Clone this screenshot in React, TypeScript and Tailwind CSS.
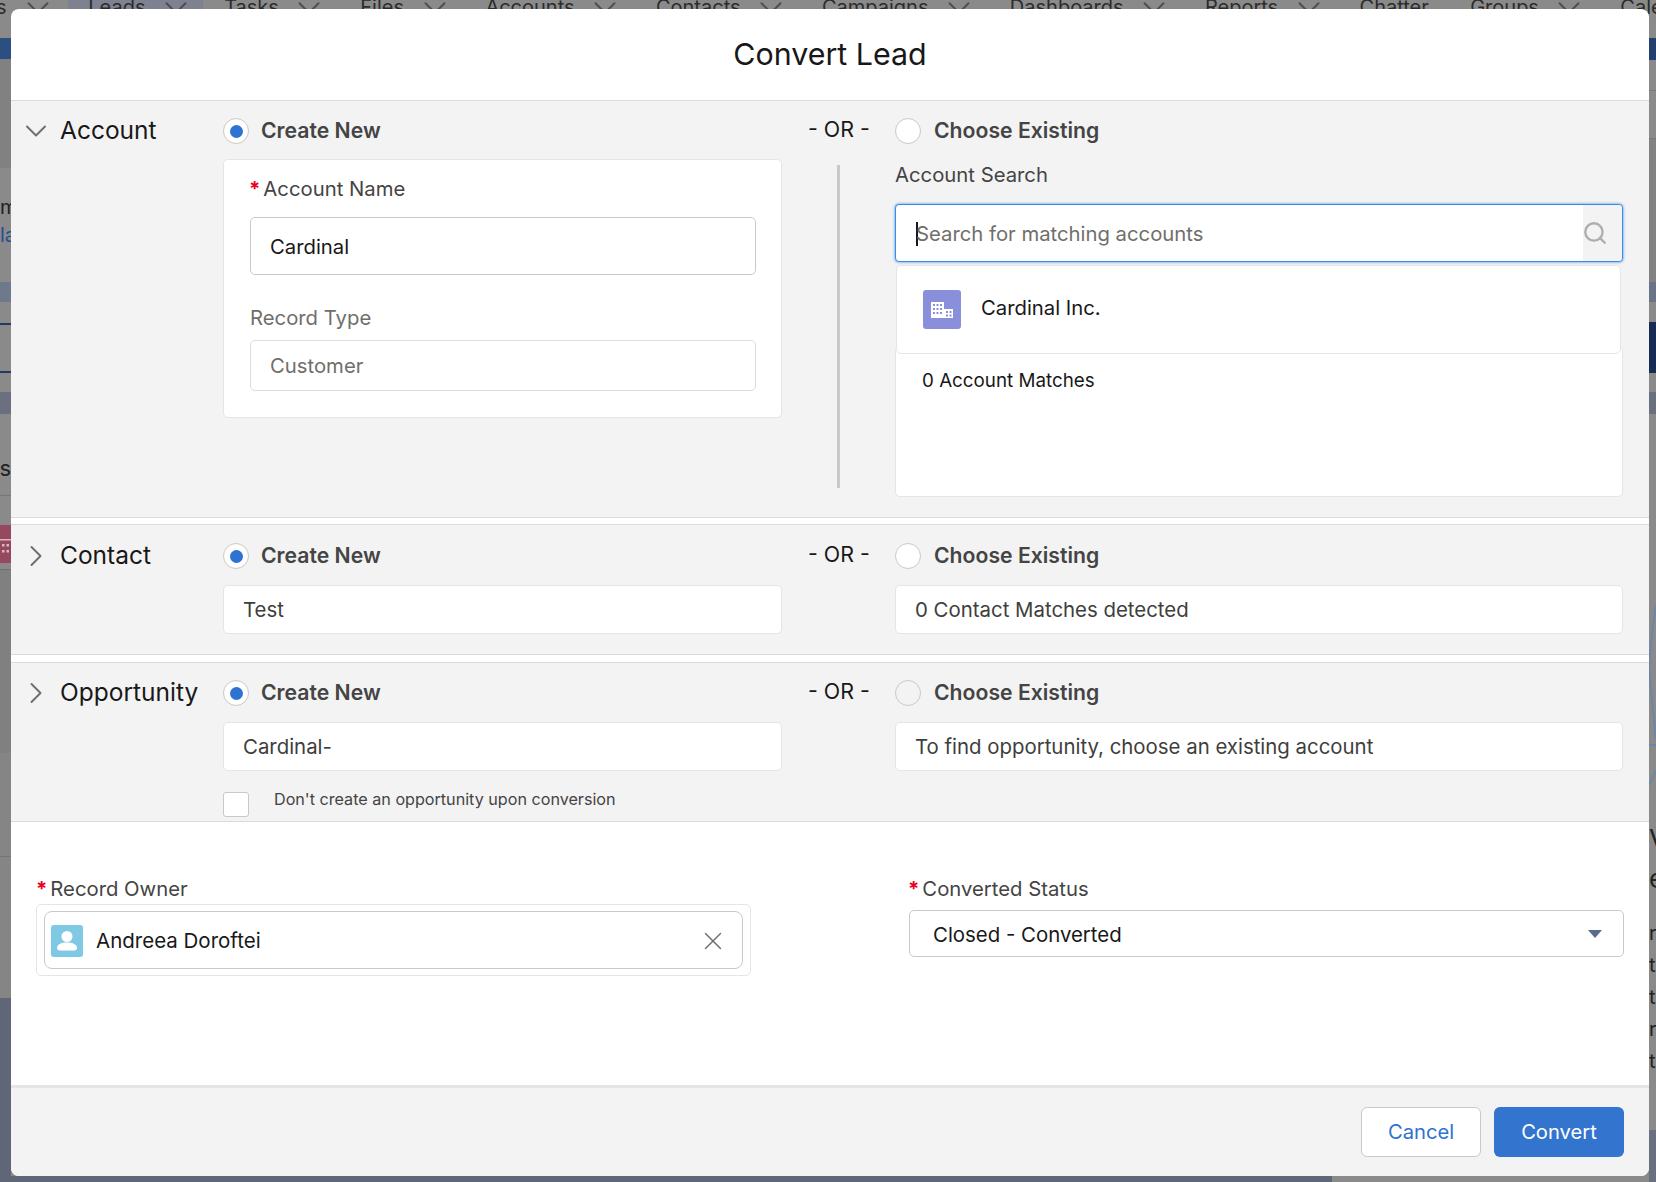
import React from 'react';
import { ChevronDown, ChevronRight, Search, X } from 'lucide-react';

const NAV_ITEMS = [
  { name: 'Leads', active: true, menu: true },
  { name: 'Tasks', menu: true },
  { name: 'Files', menu: true },
  { name: 'Accounts', menu: true },
  { name: 'Contacts', menu: true },
  { name: 'Campaigns', menu: true },
  { name: 'Dashboards', menu: true },
  { name: 'Reports', menu: true },
  { name: 'Chatter' },
  { name: 'Groups', menu: true },
  { name: 'Calendar' },
];

const Radio = ({ checked, muted }: { checked?: boolean; muted?: boolean }) => (
  <span
    className={`flex h-[26px] w-[26px] shrink-0 items-center justify-center rounded-full border border-[#c9c9c9] ${muted ? 'bg-[#f3f3f3]' : 'bg-white'}`}
  >
    {checked && <span className="h-[13px] w-[13px] rounded-full bg-[#2e72d2]" />}
  </span>
);

const Required = () => <span className="-ml-[1px] mr-[3px] font-bold text-[#ea001e]">*</span>;

type ChoiceRowProps = {
  expanded?: boolean;
  title: string;
  mutedRadio?: boolean;
};

// heading row shared by the three sections
const ChoiceRow = ({ expanded, title, mutedRadio }: ChoiceRowProps) => (
  <div className="flex h-[26px] items-center">
    <div className="flex w-[212px] items-center pl-[7px]">
      {expanded ? (
        <ChevronDown className="h-[36px] w-[36px] shrink-0 text-[#706e6b]" strokeWidth={1.3} />
      ) : (
        <ChevronRight className="h-[36px] w-[36px] shrink-0 text-[#706e6b]" strokeWidth={1.3} />
      )}
      <span className="mb-[2px] ml-[6px] text-[24.500px] leading-none text-[#181818]">{title}</span>
    </div>
    <div className="flex w-[559px] items-center gap-[12px]">
      <Radio checked />
      <span className="text-[21.200px] font-semibold text-[#444444]">Create New</span>
    </div>
    <div className="mb-[3px] w-[113px] pl-[26px] text-[21.400px] text-[#181818]">- OR -</div>
    <div className="flex items-center gap-[13px]">
      <Radio muted={mutedRadio} />
      <span className="text-[21.200px] font-semibold text-[#444444]">Choose Existing</span>
    </div>
  </div>
);

const Summary = ({ children }: { children: React.ReactNode }) => (
  <div className="flex h-[49px] items-center rounded-[5px] border border-[#e5e5e5] bg-white px-[19px] pt-[1px] text-[20.400px] text-[#3e3e3c]">
    {children}
  </div>
);

const BuildingIcon = () => (
  <svg viewBox="0 0 38 39" className="h-[39px] w-[38px] shrink-0 rounded-[3px] bg-[#8a8fdb]">
    <path fill="#fff" d="M8 12h13v16H8z" />
    <path
      fill="#8a8fdb"
      d="M10 14h2v2h-2zM13.500 14h2v2h-2zM17 14h2v2h-2zM10 18h2v2h-2zM13.500 18h2v2h-2zM17 18h2v2h-2zM10 22h2v2h-2zM13.500 22h2v2h-2zM17 22h2v2h-2z"
    />
    <path fill="#fff" d="M21 19h9v9h-9z" />
    <path fill="#8a8fdb" d="M23 21h2v2h-2zM26.500 21h2v2h-2zM23 24.500h2v2h-2zM26.500 24.500h2v2h-2z" />
  </svg>
);

const UserIcon = () => (
  <svg viewBox="0 0 32 32" className="h-[32px] w-[32px] shrink-0 rounded-[3px] bg-[#7fc9e5]">
    <circle cx="16" cy="11.500" r="5.500" fill="#fff" />
    <path fill="#fff" d="M6 23c0-3.500 4-5.500 10-5.500S26 19.500 26 23c0 1.400-1 2.500-2.500 2.500h-15C7 25.500 6 24.400 6 23z" />
  </svg>
);

// Left and right slivers of the page behind the scrim
const LeftRail = () => (
  <div className="flex w-[11px] shrink-0 flex-col overflow-hidden text-[20px] leading-[26px] text-[#222222]">
    <div className="h-[21px] shrink-0 bg-[#2c4f82]" />
    <div className="h-[109px] shrink-0 bg-[#818181]" />
    <div className="mt-[26px] h-[26px] shrink-0 text-right">m</div>
    <div className="mt-[2px] h-[24px] shrink-0 text-right text-[#24518f]">la</div>
    <div className="mt-[36px] h-[20px] shrink-0 bg-[#6e7a8c]" />
    <div className="mt-[21px] h-[2px] shrink-0 bg-[#1f3a66]" />
    <div className="mt-[46px] h-[2px] shrink-0 bg-[#1f3a66]" />
    <div className="mt-[19px] h-[22px] shrink-0 bg-[#6a7080]" />
    <div className="mt-[41px] flex h-[26px] shrink-0 justify-end whitespace-nowrap text-[22px]">
      <span className="shrink-0">ys</span>
    </div>
    <div className="mt-[14px] h-px shrink-0 bg-[#767676]" />
    <svg viewBox="0 0 11 38" className="mt-[29px] h-[38px] w-[11px] shrink-0 bg-[#96495e]">
      <path fill="#d9b8c2" d="M0 14h11v1.500H0zM2 19h2.500v2.500H2zM6.500 19H9v2.500H6.500zM2 25h2.500v2.500H2zM6.500 25H9v2.500H6.500z" />
    </svg>
    <div className="mt-[6px] h-px shrink-0 bg-[#6f6f6f]" />
    <div className="h-[183px] shrink-0 bg-[#808080]" />
    <div className="h-[103px] shrink-0 bg-[#858585]" />
    <div className="h-px shrink-0 bg-[#757575]" />
    <div className="h-[141px] shrink-0 bg-[#858585]" />
    <div className="flex-1 bg-[#5f6678]" />
  </div>
);

const RightRail = () => (
  <div className="flex w-[7px] shrink-0 flex-col overflow-hidden text-[20px] leading-[32px] text-[#222222]">
    <div className="h-[22px] shrink-0 bg-[#24406e]" />
    <div className="mt-[30px] h-px shrink-0 bg-[#777777]" />
    <div className="mt-[47px] h-px shrink-0 bg-[#777777]" />
    <div className="h-[143px] shrink-0 bg-[#828282]" />
    <div className="h-[20px] shrink-0 bg-[#6a7486]" />
    <div className="mt-[20px] h-[51px] shrink-0 bg-[#162c52]" />
    <div className="mt-[19px] h-[22px] shrink-0 bg-[#6b7080]" />
    <svg viewBox="0 0 7 190" className="mt-[186px] h-[190px] w-[7px] shrink-0" fill="none" stroke="#6b86a6" strokeWidth="2">
      <path d="M7 5C3 30 1 50 0 70M0 70C3 100 5 120 7 140M0 145h7M0 185c3-5 5-10 7-14" />
    </svg>
    <div className="mt-[29px] h-[40px] shrink-0 text-[26px] leading-[40px]">V</div>
    <div className="h-[40px] shrink-0 text-[26px] leading-[40px]">e</div>
    <div className="mt-[18px] h-[32px] shrink-0">r</div>
    <div className="h-[32px] shrink-0">t</div>
    <div className="h-[32px] shrink-0 whitespace-nowrap">ta</div>
    <div className="h-[32px] shrink-0">r</div>
    <div className="h-[32px] shrink-0">t</div>
    <div className="mt-[53px] flex-1 bg-[#6b7080]" />
  </div>
);

const App: React.FC = () => {
  return (
    <div className="relative flex h-[1182px] w-[1656px] flex-col overflow-hidden bg-[#8a8a8a] font-['Inter',sans-serif]">
      {/* Nav behind the scrim, cut by the top of the window */}
      <div className="-mt-[6px] flex h-[44px] shrink-0 text-[20px] leading-[26px] text-[#2b2b2b]">
        <div className="ml-[-4px] flex h-[26px] shrink-0 items-center gap-[22px] pr-[20px]">
          <span>s</span>
          <ChevronDown className="-mx-[9.500px] mt-[2px] h-[38px] w-[38px] shrink-0 text-[#4d4d4d]" strokeWidth={1.2} />
        </div>
        {NAV_ITEMS.map((item) => (
          <div
            key={item.name}
            className={`flex h-[26px] shrink-0 items-center gap-[21px] pl-[20.700px] ${item.active ? 'bg-[#7d8190] pr-[18px]' : 'pr-[20.700px]'}`}
          >
            <span>{item.name}</span>
            {item.menu && (
              <ChevronDown className="-mx-[9.500px] mt-[2px] h-[38px] w-[38px] shrink-0 text-[#4d4d4d]" strokeWidth={1.2} />
            )}
          </div>
        ))}
      </div>

      <div className="flex flex-1">
        <LeftRail />
        <div className="flex flex-1 flex-col justify-end">
          <div className="h-[6px] w-[1321px] bg-[#5f6678]" />
        </div>
        <RightRail />
      </div>

      {/* Modal */}
      <div className="absolute bottom-[6px] left-[11px] right-[7px] top-[9px] flex flex-col overflow-hidden rounded-[8px] bg-white">
        <header className="flex h-[91px] shrink-0 items-center justify-center pb-[1px]">
          <h1 className="text-[30.400px] leading-none text-[#181818]">Convert Lead</h1>
        </header>

        {/* Account */}
        <section className="h-[418px] shrink-0 border-y border-[#dddbda] bg-[#f3f3f3] pt-[17px]">
          <ChoiceRow expanded title="Account" />
          <div className="mt-[15px] flex pl-[212px]">
            <div className="h-[259px] w-[559px] rounded-[5px] border border-[#e5e5e5] bg-white pl-[26px] pr-[25px] pt-[16px]">
              <div className="text-[20.300px] leading-[26px] text-[#444444]">
                <Required />
                Account Name
              </div>
              <div className="mt-[15px] flex h-[58px] items-center rounded-[5px] border border-[#c9c9c9] px-[19px] pt-[2px] text-[20.300px] text-[#181818]">
                Cardinal
              </div>
              <div className="mt-[30px] text-[20.300px] leading-[26px] text-[#706e6b]">Record Type</div>
              <div className="mt-[9px] flex h-[51px] items-center rounded-[5px] border border-[#dddbe5] px-[19px] pt-[1px] text-[20.300px] text-[#706e6b]">
                Customer
              </div>
            </div>
            <div className="flex w-[113px] justify-center pt-[6px]">
              <div className="h-[323px] w-[3px] bg-[#c9c9c9]" />
            </div>
            <div className="w-[728px]">
              <div className="mt-[3px] text-[20.300px] leading-[26px] text-[#444444]">Account Search</div>
              <div className="mt-[16px] flex h-[58px] items-center rounded-[4px] border border-[#3b8ae6] bg-white shadow-[0_0_3px_#3b8ae6]">
                <div className="flex flex-1 items-center pl-[20px] pt-[2px] text-[20.300px] text-[#706e6b]">
                  <span className="mr-[-2px] h-[24px] w-[2px] bg-[#181818]" />
                  Search for matching accounts
                </div>
                <div className="flex h-full w-[39px] items-center rounded-r-[4px] bg-[#f3f3f3]">
                  <Search className="-ml-[1px] h-[26px] w-[26px] text-[#aeaeae]" strokeWidth={2.2} />
                </div>
              </div>
              <div className="relative z-10 ml-[1px] mr-[2px] mt-[3px] flex h-[89px] items-center gap-[20px] rounded-[5px] border border-[#e5e5e5] bg-white pl-[26px]">
                <BuildingIcon />
                <span className="mb-[3px] text-[20.300px] text-[#181818]">Cardinal Inc.</span>
              </div>
              <div className="-mt-[8px] h-[151px] rounded-[5px] border border-[#e5e5e5] bg-white pl-[26px] pt-[22px] text-[18.800px] leading-[24px] text-[#181818]">
                0 Account Matches
              </div>
            </div>
          </div>
        </section>

        {/* Contact */}
        <section className="mt-[6px] h-[131px] shrink-0 border-y border-[#dddbda] bg-[#f3f3f3] pt-[18px]">
          <ChoiceRow title="Contact" />
          <div className="mt-[16px] flex pl-[212px]">
            <div className="w-[559px]">
              <Summary>Test</Summary>
            </div>
            <div className="ml-[113px] w-[728px]">
              <Summary>0 Contact Matches detected</Summary>
            </div>
          </div>
        </section>

        {/* Opportunity */}
        <section className="mt-[7px] h-[160px] shrink-0 border-y border-[#dddbda] bg-[#f3f3f3] pt-[17px]">
          <ChoiceRow title="Opportunity" mutedRadio />
          <div className="mt-[16px] flex pl-[212px]">
            <div className="w-[559px]">
              <Summary>Cardinal-</Summary>
            </div>
            <div className="ml-[113px] w-[728px]">
              <Summary>To find opportunity, choose an existing account</Summary>
            </div>
          </div>
          <div className="mt-[21px] flex pl-[212px]">
            <span className="h-[25px] w-[26px] rounded-[3px] border border-[#c9c9c9] bg-white" />
            <span className="ml-[25px] mt-[-5px] text-[16.150px] leading-[24px] text-[#444444]">
              Don't create an opportunity upon conversion
            </span>
          </div>
        </section>

        {/* Owner and status */}
        <div className="flex flex-1 pt-[54px]">
          <div className="ml-[25px] w-[715px]">
            <div className="pl-[1px] text-[20.300px] leading-[26px] text-[#444444]">
              <Required />
              Record Owner
            </div>
            <div className="mt-[2px] rounded-[5px] border border-[#e5e5e5] p-[6px] pl-[7px] pr-[7px]">
              <div className="flex h-[58px] items-center rounded-[8px] border border-[#c9c9c9] pl-[6px] pr-[14px] pt-[2px]">
                <UserIcon />
                <span className="ml-[13px] flex-1 pt-[1px] text-[20.500px] text-[#181818]">Andreea Doroftei</span>
                <X className="h-[30px] w-[30px] text-[#706e6b]" strokeWidth={1.2} />
              </div>
            </div>
          </div>
          <div className="ml-[158px] w-[715px]">
            <div className="text-[20.300px] leading-[26px] text-[#444444]">
              <Required />
              Converted Status
            </div>
            <div className="mt-[8px] flex h-[47px] items-center justify-between rounded-[5px] border border-[#c9c9c9] pl-[23px] pr-[21px] text-[20.400px] text-[#181818]">
              <span className="pt-[4px]">Closed - Converted</span>
              <span className="h-0 w-0 border-x-[7px] border-t-[8px] border-x-transparent border-t-[#5a6a8f]" />
            </div>
          </div>
        </div>

        <footer className="flex h-[91px] shrink-0 items-start justify-end gap-[13px] border-t-[3px] border-[#e5e5e5] bg-[#f3f3f3] pr-[25px] pt-[19px]">
          <button className="h-[50px] w-[120px] rounded-[6px] border border-[#c9c9c9] bg-white text-[20.200px] text-[#2e72d2]">
            Cancel
          </button>
          <button className="h-[50px] w-[130px] rounded-[6px] bg-[#3374ce] text-[20.200px] text-white">Convert</button>
        </footer>
      </div>
    </div>
  );
};

export default App;
